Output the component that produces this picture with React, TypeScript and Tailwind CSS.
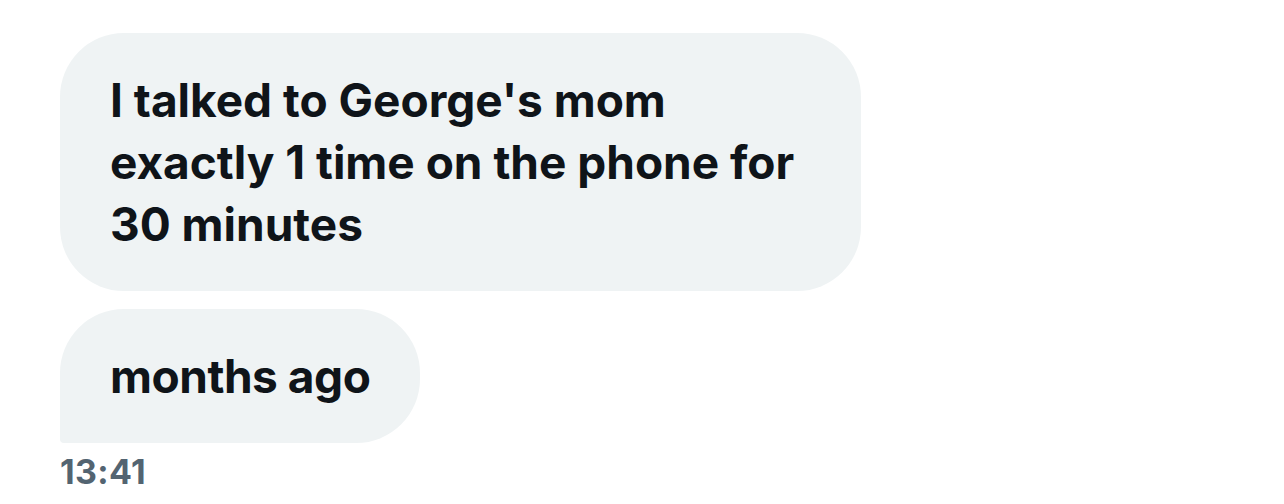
export default function App() {
  return (
    <div
      className="min-h-[504px] w-[1284px] bg-white pl-[60px] pt-[33px] text-[#0f1419]"
      style={{ fontFamily: 'Inter, "Noto Sans", sans-serif' }}
    >
      <div className="flex flex-col items-start">
        <div className="w-[801px] rounded-[64px] bg-[#eff3f4] px-[50px] py-[36px] text-[46px] font-bold leading-[62px]">
          I talked to George's mom
          <br />
          exactly 1 time on the phone for
          <br />
          30 minutes
        </div>
        <div className="mt-[18px] w-[360px] whitespace-nowrap rounded-[64px] rounded-bl-[4px] bg-[#eff3f4] px-[50px] py-[36px] text-[46px] font-bold leading-[62px] tracking-[-0.01em]">
          months ago
        </div>
        <div className="mt-[9px] text-[34px] font-bold leading-[40px] tracking-[0.01em] text-[#536471]">13:41</div>
      </div>
    </div>
  )
}
